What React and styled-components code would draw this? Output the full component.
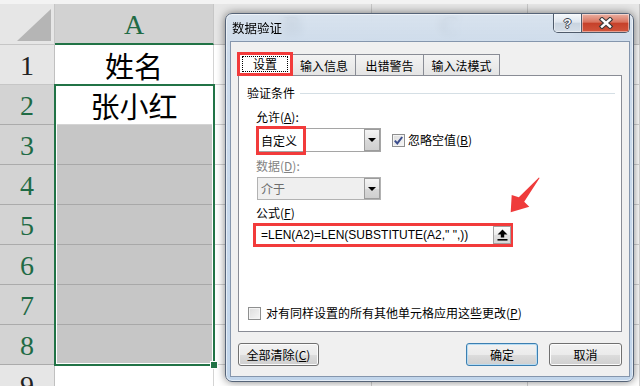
import React from 'react';
import styled, { createGlobalStyle } from 'styled-components';

const GlobalStyle = createGlobalStyle`
  html, body { margin: 0; padding: 0; }
  body {
    width: 640px;
    height: 386px;
    overflow: hidden;
    background: #fff;
    font-family: "Noto Sans CJK SC", sans-serif;
  }
`;

const Screen = styled.div`
  position: relative;
  width: 640px;
  height: 386px;
  overflow: hidden;
  background: #fff;
`;

/* ---------- spreadsheet ---------- */

const TopStrip = styled.div`
  height: 4px;
  background: #f3f3f3;
`;

const Sheet = styled.div`
  position: relative;
  display: grid;
  grid-template-columns: 55px 159px 158px 156px 1fr;
  grid-template-rows: 41px repeat(9, 40px);
`;

const Corner = styled.div`
  display: flex;
  align-items: flex-end;
  justify-content: flex-end;
  padding: 0 3px 3px 0;
  background: #e6e6e6;
  border-right: 1px solid #c6c6c6;
  border-bottom: 1px solid #c6c6c6;
  box-sizing: border-box;

  &::after {
    content: "";
    width: 0;
    height: 0;
    border-left: 34px solid transparent;
    border-bottom: 32px solid #b5b5b5;
  }
`;

const ColHead = styled.div`
  display: flex;
  align-items: center;
  justify-content: center;
  padding-top: 3px;
  box-sizing: border-box;
  background: ${p => (p.$selected ? '#d2d2d2' : '#e6e6e6')};
  color: ${p => (p.$selected ? '#1f6b45' : '#444')};
  border-right: 1px solid #c6c6c6;
  border-bottom: ${p => (p.$selected ? '2px solid #217346' : '1px solid #c6c6c6')};
  font-family: "Liberation Serif", serif;
  font-size: 28px;
`;

const RowHead = styled.div`
  display: flex;
  align-items: center;
  justify-content: center;
  padding-top: 3px;
  box-sizing: border-box;
  background: ${p => (p.$selected ? '#d3d3d3' : '#e6e6e6')};
  color: ${p => (p.$selected ? '#1f6b45' : '#222')};
  border-right: 1px solid #c0c0c0;
  border-bottom: 1px solid ${p => (p.$selected ? '#ababab' : '#c6c6c6')};
  font-family: "Liberation Serif", serif;
  font-size: 28px;
`;

const Cell = styled.div`
  display: flex;
  align-items: center;
  justify-content: center;
  box-sizing: border-box;
  background: ${p => (p.$shaded ? '#c6c6c6' : '#fff')};
  border-right: 1px solid #d4d4d4;
  border-bottom: 1px solid ${p => (p.$shaded ? '#a8a8a8' : '#d4d4d4')};
  font-family: "Noto Sans CJK SC", sans-serif;
  font-size: 29px;
  color: #000;
`;

const Selection = styled.div`
  position: absolute;
  left: 54px;
  top: 80px;
  width: 161px;
  height: 282px;
  box-sizing: border-box;
  border: 2px solid #217346;
  box-shadow: inset 0 0 0 1px #fff;
  pointer-events: none;
`;

const FillHandle = styled.div`
  position: absolute;
  right: -5px;
  bottom: -5px;
  width: 6px;
  height: 6px;
  background: #217346;
  border: 1px solid #fff;
`;

/* ---------- dialog window ---------- */

const Dialog = styled.div`
  position: absolute;
  left: 225px;
  top: 13px;
  width: 409px;
  height: 369px;
  box-sizing: border-box;
  display: flex;
  flex-direction: column;
  padding: 0 3px 4px 4px;
  border: 1px solid #566478;
  border-radius: 7px;
  background: linear-gradient(180deg, rgba(214, 226, 239, 0.86) 0px, rgba(200, 216, 234, 0.9) 40px, rgba(190, 211, 234, 0.95) 100%);
  backdrop-filter: blur(4px);
  box-shadow: 0 0 9px rgba(0, 0, 0, 0.5), inset 0 0 0 1px rgba(255, 255, 255, 0.55);
  font-family: "Noto Sans CJK SC", sans-serif;
  font-size: 12px;
  color: #000;
`;

const TitleBar = styled.div`
  display: flex;
  align-items: flex-start;
  height: 27px;
  flex-shrink: 0;
`;

const Title = styled.div`
  flex: 1;
  padding-left: 2px;
  line-height: 28px;
  font-size: 12.5px;
`;

const CaptionButtons = styled.div`
  display: flex;
  height: 19px;
  border: 1px solid #4f5b6b;
  border-top: none;
  border-radius: 0 0 5px 5px;
  overflow: hidden;
  box-sizing: border-box;
`;

const CapButton = styled.div`
  width: ${p => p.$w}px;
  display: flex;
  align-items: center;
  justify-content: center;
  background: ${p =>
    p.$close
      ? 'linear-gradient(180deg, #eab0a2 0%, #d9735e 45%, #c6412a 52%, #d1553c 100%)'
      : 'linear-gradient(180deg, #f5f8fb 0%, #dfe7f0 45%, #c9d4e0 52%, #d5dee8 100%)'};
  box-shadow: inset 0 0 0 1px rgba(255, 255, 255, 0.45);

  & + & {
    border-left: 1px solid #4f5b6b;
  }
`;

const HelpGlyph = styled.span`
  font-family: "Liberation Sans", sans-serif;
  font-weight: bold;
  font-size: 13px;
  line-height: 1;
  color: #f6f6f6;
  text-shadow: 1px 0 #3b4350, -1px 0 #3b4350, 0 1px #3b4350, 0 -1px #3b4350;
`;

const Client = styled.div`
  flex: 1;
  display: flex;
  flex-direction: column;
  padding: 10px 7px 0 7px;
  background: #f0f0f0;
  border: 1px solid #8596ad;
`;

const TabRow = styled.div`
  display: flex;
  align-items: flex-end;
  height: 23px;
  margin-left: -1px;
`;

const Tab = styled.div`
  position: relative;
  box-sizing: border-box;
  width: ${p => p.$w}px;
  height: ${p => (p.$active ? 24 : 21)}px;
  margin-bottom: ${p => (p.$active ? -1 : 0)}px;
  display: flex;
  align-items: center;
  justify-content: center;
  border: ${p => (p.$active ? '3px solid #f23b3b' : '1px solid #898c95')};
  border-bottom: ${p => (p.$active ? '3px solid #f23b3b' : 'none')};
  margin-left: ${p => (p.$active ? 0 : -1)}px;
  background: ${p => (p.$active ? '#fff' : 'linear-gradient(180deg, #f3f3f3, #e4e4e4)')};
  z-index: ${p => (p.$active ? 1 : 0)};
  white-space: nowrap;

  &:first-child {
    margin-left: 0;
  }
`;

const FocusText = styled.span`
  padding: 0 10px;
  border: 1px dotted #000;
  line-height: 14px;
`;

const Panel = styled.div`
  box-sizing: border-box;
  height: 257px;
  display: flex;
  flex-direction: column;
  padding: 9px 0 10px 0;
  background: #fff;
  border: 1px solid #898c95;
`;

const GroupHeader = styled.div`
  display: flex;
  align-items: center;
  gap: 5px;
  margin: 0 6px 0 8px;
  line-height: 16px;

  &::after {
    content: "";
    flex: 1;
    height: 1px;
    background: #d5dfe5;
  }
`;

const Label = styled.div`
  margin: ${p => p.$top}px 0 0 17px;
  line-height: 16px;
  color: ${p => (p.$disabled ? '#838383' : '#000')};
`;

const FieldRow = styled.div`
  display: flex;
  align-items: center;
  margin: 3px 0 0 18px;
`;

const Select = styled.div`
  position: relative;
  box-sizing: border-box;
  width: 124px;
  height: ${p => (p.$disabled ? 23 : 24)}px;
  display: flex;
  border: 1px solid ${p => (p.$disabled ? '#b2b2b2' : '#a5a5a5')};
  background: ${p => (p.$disabled ? '#efefef' : '#fff')};
  color: ${p => (p.$disabled ? '#6d6d6d' : '#000')};
`;

const SelectText = styled.div`
  flex: 1;
  padding-left: 3px;
  display: flex;
  align-items: center;
`;

const DropButton = styled.div`
  box-sizing: border-box;
  width: 16px;
  display: flex;
  align-items: center;
  justify-content: center;
  border: 1px solid #9c9c9c;
  background: linear-gradient(180deg, #f4f4f4, #e6e6e6 50%, #d9d9d9 50%, #cfcfcf);

  &::after {
    content: "";
    width: 0;
    height: 0;
    border-left: 4px solid transparent;
    border-right: 4px solid transparent;
    border-top: 4px solid #000;
  }
`;

const RedMark = styled.div`
  position: absolute;
  left: -2px;
  top: -3px;
  width: 50px;
  height: 29px;
  box-sizing: border-box;
  border: 3px solid #f23b3b;
  pointer-events: none;
`;

const CheckBox = styled.span`
  box-sizing: border-box;
  width: 13px;
  height: 13px;
  display: inline-flex;
  align-items: center;
  justify-content: center;
  border: 1px solid #8e8f8f;
  background: linear-gradient(135deg, #dcdcdc, #f6f6f6);
  box-shadow: inset 0 0 0 1px #f4f4f4;
  flex-shrink: 0;
`;

const CheckLabel = styled.span`
  margin-left: ${p => p.$gap}px;
  line-height: 16px;
`;

const CheckRow = styled.div`
  display: flex;
  align-items: center;
  margin-left: ${p => p.$left}px;
  margin-top: ${p => (p.$auto ? 'auto' : '0')};
`;

const FormulaBox = styled.div`
  box-sizing: border-box;
  width: 260px;
  height: 24px;
  margin: 2px 0 0 14px;
  display: flex;
  align-items: center;
  border: 3px solid #f23b3b;
  background: #fff;
`;

const FormulaText = styled.div`
  flex: 1;
  padding-left: 5px;
  font-family: "Liberation Sans", sans-serif;
  font-size: 12px;
  white-space: pre;
`;

const RefButton = styled.div`
  box-sizing: border-box;
  width: 18px;
  height: 18px;
  margin-right: -1px;
  display: flex;
  align-items: center;
  justify-content: center;
  border: 1px solid #a0a0a0;
  background: linear-gradient(180deg, #fdfdfd, #ececec 50%, #e0e0e0 50%, #d8d8d8);
`;

const ButtonRow = styled.div`
  display: flex;
  gap: 11px;
  margin-top: 11px;
`;

const Spacer = styled.div`
  flex: 1;
`;

const Button = styled.div`
  box-sizing: border-box;
  width: ${p => p.$w}px;
  height: 23px;
  display: flex;
  align-items: center;
  justify-content: center;
  border: 1px solid ${p => (p.$default ? '#3c7fb1' : '#707070')};
  border-radius: 3px;
  background: linear-gradient(180deg, #f2f2f2 0%, #ebebeb 50%, #dddddd 51%, #cfcfcf 100%);
  box-shadow: inset 0 0 0 1px ${p => (p.$default ? '#b7dcf3' : '#fcfcfc')};
`;

const Arrow = styled.svg`
  position: absolute;
  left: 500px;
  top: 170px;
`;

const CheckMark = () => (
  <svg width="11" height="11" viewBox="0 0 11 11">
    <path d="M1.8 5.6 L4.3 8.4 L9.2 2" fill="none" stroke="#3b4d8c" strokeWidth="2" />
  </svg>
);

const CloseIcon = () => (
  <svg width="16" height="12" viewBox="0 0 16 12">
    <path d="M4 2.5 L12 9.5 M12 2.5 L4 9.5" stroke="#3a3a3a" strokeWidth="4.6" strokeLinecap="square" />
    <path d="M4 2.5 L12 9.5 M12 2.5 L4 9.5" stroke="#fff" strokeWidth="2.4" strokeLinecap="square" />
  </svg>
);

const UploadIcon = () => (
  <svg width="11" height="12" viewBox="0 0 11 12">
    <path d="M5.5 0.5 L10.5 5.5 L7.2 5.5 L7.2 8.5 L3.8 8.5 L3.8 5.5 L0.5 5.5 Z" fill="#000" />
    <rect x="0.5" y="10" width="10" height="1.6" fill="#000" />
  </svg>
);

const rows = [1, 2, 3, 4, 5, 6, 7, 8, 9];

const cellText = r => (r === 1 ? '姓名' : r === 2 ? '张小红' : '');

export default function App() {
  return (
    <Screen>
      <GlobalStyle />
      <TopStrip />
      <Sheet>
        <Corner />
        <ColHead $selected>A</ColHead>
        <ColHead>B</ColHead>
        <ColHead>C</ColHead>
        <ColHead>D</ColHead>
        {rows.map(r => (
          <React.Fragment key={r}>
            <RowHead $selected={r >= 2 && r <= 8}>{r}</RowHead>
            <Cell $shaded={r >= 3 && r <= 8}>{cellText(r)}</Cell>
            <Cell />
            <Cell />
            <Cell />
          </React.Fragment>
        ))}
        <Selection>
          <FillHandle />
        </Selection>
      </Sheet>

      <Dialog>
        <TitleBar>
          <Title>数据验证</Title>
          <CaptionButtons>
            <CapButton $w={27}>
              <HelpGlyph>?</HelpGlyph>
            </CapButton>
            <CapButton $w={47} $close>
              <CloseIcon />
            </CapButton>
          </CaptionButtons>
        </TitleBar>

        <Client>
          <TabRow>
            <Tab $active $w={56}>
              <FocusText>设置</FocusText>
            </Tab>
            <Tab $w={64}>输入信息</Tab>
            <Tab $w={69}>出错警告</Tab>
            <Tab $w={77}>输入法模式</Tab>
          </TabRow>

          <Panel>
            <GroupHeader>验证条件</GroupHeader>

            <Label $top={8}>
              允许(<u>A</u>):
            </Label>
            <FieldRow>
              <Select>
                <SelectText>自定义</SelectText>
                <DropButton />
                <RedMark />
              </Select>
              <CheckRow $left={11}>
                <CheckBox>
                  <CheckMark />
                </CheckBox>
                <CheckLabel $gap={3}>
                  忽略空值(<u>B</u>)
                </CheckLabel>
              </CheckRow>
            </FieldRow>

            <Label $top={6} $disabled>
              数据(<u>D</u>):
            </Label>
            <FieldRow>
              <Select $disabled>
                <SelectText>介于</SelectText>
                <DropButton />
              </Select>
            </FieldRow>

            <Label $top={5}>
              公式(<u>F</u>)
            </Label>
            <FormulaBox>
              <FormulaText>=LEN(A2)=LEN(SUBSTITUTE(A2," ",))</FormulaText>
              <RefButton>
                <UploadIcon />
              </RefButton>
            </FormulaBox>

            <CheckRow $left={9} $auto>
              <CheckBox />
              <CheckLabel $gap={5}>
                对有同样设置的所有其他单元格应用这些更改(<u>P</u>)
              </CheckLabel>
            </CheckRow>
          </Panel>

          <ButtonRow>
            <Button $w={81}>
              全部清除(<u>C</u>)
            </Button>
            <Spacer />
            <Button $w={72} $default>
              确定
            </Button>
            <Button $w={73}>取消</Button>
          </ButtonRow>
        </Client>
      </Dialog>

      <Arrow width="45" height="50" viewBox="0 0 45 50">
        <polygon
          points="10.7,42.3 29.3,36.7 24.2,31.7 39.6,8 38.9,7.6 18.8,27.3 11.7,25"
          fill="#ef3b3b"
        />
      </Arrow>
    </Screen>
  );
}
